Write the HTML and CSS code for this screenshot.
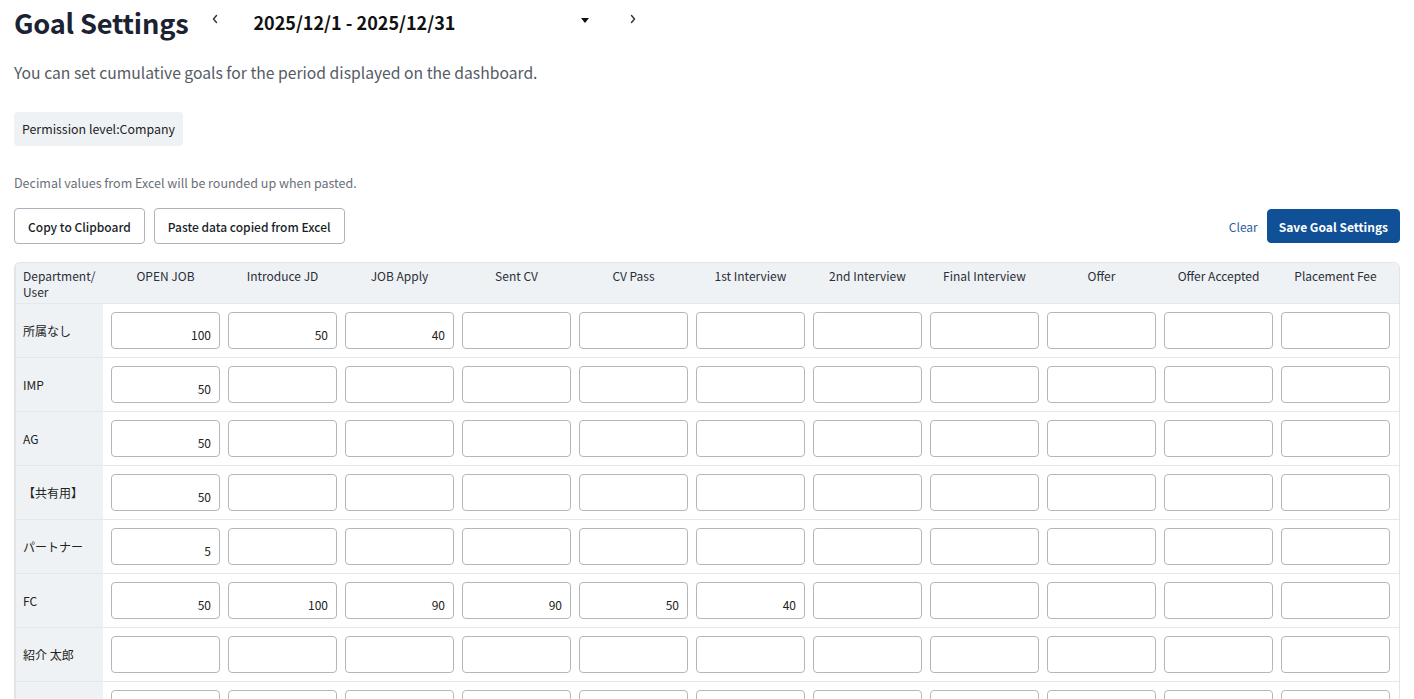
FILE: index.html
```html
<!DOCTYPE html>
<html lang="ja">
<head>
<meta charset="utf-8">
<title>Goal Settings</title>
<link rel="stylesheet" href="styles.css">
</head>
<body>
<div class="page">
  <header class="title-row">
    <h1 class="title">Goal Settings</h1>
    <div class="period">
      <button class="nav nav-prev" aria-label="previous">
        <svg width="8" height="10" viewBox="0 0 8 10"><path d="M5.5 1.5 L2.5 5 L5.5 8.5" fill="none" stroke="#333" stroke-width="1.4" stroke-linecap="round" stroke-linejoin="round"/></svg>
      </button>
      <div class="range">
        <span class="range-text">2025/12/1 - 2025/12/31</span>
        <svg class="caret" width="8" height="5" viewBox="0 0 8 5"><path d="M0 0 H8 L4 5 Z" fill="#111"/></svg>
      </div>
      <button class="nav nav-next" aria-label="next">
        <svg width="8" height="10" viewBox="0 0 8 10"><path d="M2.5 1.5 L5.5 5 L2.5 8.5" fill="none" stroke="#333" stroke-width="1.4" stroke-linecap="round" stroke-linejoin="round"/></svg>
      </button>
    </div>
  </header>

  <p class="desc">You can set cumulative goals for the period displayed on the dashboard.</p>

  <div class="badge">Permission level:Company</div>

  <p class="note">Decimal values from Excel will be rounded up when pasted.</p>

  <div class="toolbar">
    <div class="tool-left">
      <button class="btn">Copy to Clipboard</button>
      <button class="btn">Paste data copied from Excel</button>
    </div>
    <div class="tool-right">
      <a class="link">Clear</a>
      <button class="btn btn-primary">Save Goal Settings</button>
    </div>
  </div>

  <div class="table-wrap">
    <table class="goals">
      <thead>
        <tr>
          <th class="label-col">Department/<br>User</th>
          <th>OPEN JOB</th>
          <th>Introduce JD</th>
          <th>JOB Apply</th>
          <th>Sent CV</th>
          <th>CV Pass</th>
          <th>1st Interview</th>
          <th>2nd Interview</th>
          <th>Final Interview</th>
          <th>Offer</th>
          <th>Offer Accepted</th>
          <th class="last-col">Placement Fee</th>
        </tr>
      </thead>
      <tbody id="rows"></tbody>
    </table>
  </div>
</div>
<script src="app.js"></script>
</body>
</html>
```

FILE: app.js
```js
var data = [
  ["所属なし", [100, 50, 40]],
  ["IMP", [50]],
  ["AG", [50]],
  ["【共有用】", [50]],
  ["パートナー", [5]],
  ["FC", [50, 100, 90, 90, 50, 40]],
  ["紹介 太郎", []],
  ["紹介 花子", []]
];
var tbody = document.getElementById("rows");
data.forEach(function (row) {
  var tr = document.createElement("tr");
  var th = document.createElement("td");
  th.className = "label-col";
  th.textContent = row[0];
  tr.appendChild(th);
  for (var i = 0; i < 11; i++) {
    var td = document.createElement("td");
    if (i === 10) td.className = "last-col";
    var inp = document.createElement("input");
    inp.type = "text";
    inp.className = "cell-input";
    if (row[1][i] !== undefined) inp.value = row[1][i];
    td.appendChild(inp);
    tr.appendChild(td);
  }
  tbody.appendChild(tr);
});
```

FILE: styles.css
```css
* { box-sizing: border-box; }
html, body { margin: 0; padding: 0; background: #fff; }
body {
  font-family: "Noto Sans CJK JP", "Noto Sans", sans-serif;
  color: #1f2430;
}
.page { padding: 0 14px 0 14px; }

.title-row {
  display: flex;
  align-items: center;
  height: 44px;
}
.title {
  margin: 0;
  font-size: 27.2px;
  font-weight: 700;
  color: #1b2232;
  letter-spacing: -0.2px;
}
.period {
  display: flex;
  align-items: center;
  margin-left: 22px;
  margin-top: -6px;
}
.nav {
  border: 0;
  background: transparent;
  padding: 0;
  width: 10px;
  height: 20px;
  display: flex;
  align-items: center;
  justify-content: center;
  cursor: pointer;
}
.range {
  display: flex;
  align-items: center;
  width: 408px;
  padding-left: 33px;
  padding-right: 39px;
  justify-content: space-between;
}
.range-text {
  font-size: 18px;
  font-weight: 700;
  color: #111;
  margin-top: 5px;
}
.caret { margin-top: 2px; }

.desc {
  margin: 17px 0 0 0;
  font-size: 15.7px;
  line-height: 24px;
  color: #555b63;
}
.badge {
  display: inline-block;
  margin-top: 27px;
  height: 34px;
  line-height: 34px;
  padding: 0 8px;
  background: #eff2f5;
  border-radius: 4px;
  font-size: 12.4px;
  color: #222;
}
.note {
  margin: 28px 0 0 0;
  font-size: 12.5px;
  line-height: 18px;
  color: #6a7078;
}
.toolbar {
  display: flex;
  justify-content: space-between;
  align-items: center;
  margin-top: 16px;
}
.tool-left, .tool-right { display: flex; align-items: center; gap: 9px; }
.btn {
  font-family: inherit;
  height: 36px;
  padding: 0 13px;
  font-size: 12px;
  font-weight: 500;
  color: #1a1f2a;
  background: #fff;
  border: 1px solid #aeb3b9;
  border-radius: 4px;
}
.btn-primary {
  height: 34px;
  background: #0f5096;
  border-color: #0f5096;
  color: #fff;
  font-weight: 700;
  padding: 0 11px;
}
.link {
  font-size: 12px;
  color: #2f5e9c;
  cursor: pointer;
}

.table-wrap {
  margin-top: 18px;
  border: 1px solid #e1e4e8;
  border-left-width: 2px;
  border-radius: 6px;
  overflow: hidden;
  width: 1386px;
}
.goals {
  border-collapse: collapse;
  table-layout: fixed;
  width: 100%;
}
.goals th {
  background: #eff2f5;
  font-size: 12px;
  font-weight: 400;
  color: #2a2f38;
  text-align: center;
  vertical-align: top;
  padding: 5px 0 3px 8px;
  line-height: 16px;
  width: 117px;
}
.goals th.label-col, .goals td.label-col {
  width: 87px;
  text-align: left;
  padding-left: 7px;
}
.goals th.last-col, .goals td.last-col {
  width: 126px;
  padding-right: 9px;
}
.goals tbody tr { border-top: 1px solid #e5e7ea; }
.goals td {
  height: 54px;
  padding: 0 0 0 8px;
  vertical-align: middle;
}
.goals td.label-col {
  background: #eff2f5;
  font-size: 12px;
  color: #222;
}
.cell-input {
  display: block;
  width: 109px;
  height: 37px;
  border: 1px solid #b2b7bc;
  border-radius: 4px;
  font-family: inherit;
  font-size: 12px;
  color: #222;
  text-align: right;
  padding: 8px 8px 0 8px;
  background: #fff;
  outline: none;
}
```
